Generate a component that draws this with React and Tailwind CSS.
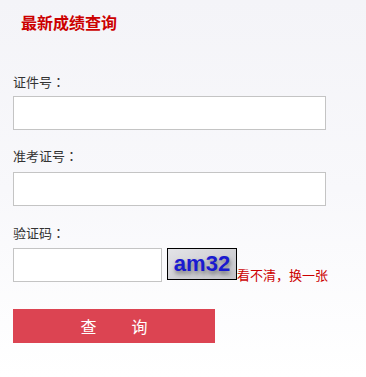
const Colon = () => (
  <span style={{ fontFamily: '"Noto Sans CJK TC", sans-serif' }}>：</span>
);

export default function App() {
  const font = { fontFamily: '"Microsoft YaHei", "Noto Sans CJK SC", "Noto Sans", sans-serif' };
  return (
    <div
      className="w-[366px] h-[377px] bg-gradient-to-b from-[#f4f4f8] via-[#f8f8fb] to-white flex flex-col pl-[13px]"
      style={font}
    >
      <div className="mt-[12px] ml-[8px] text-[16px] leading-[20px] font-bold text-[#cc0000]">最新成绩查询</div>

      <div className="mt-[42px] text-[13px] leading-[16px] text-[#333]">证件号<Colon /></div>
      <input className="mt-[6px] w-[313px] h-[34px] bg-white border border-[#c4c4c4] outline-none" />

      <div className="mt-[18px] text-[13px] leading-[16px] text-[#333]">准考证号<Colon /></div>
      <input className="mt-[8px] w-[313px] h-[34px] bg-white border border-[#c4c4c4] outline-none" />

      <div className="mt-[19px] text-[13px] leading-[16px] text-[#333]">验证码<Colon /></div>
      <div className="mt-[7px] flex items-end">
        <input className="w-[149px] h-[34px] bg-white border border-[#c4c4c4] outline-none" />
        <div className="ml-[5px] mb-[2px] w-[70px] h-[32px] border border-black bg-gradient-to-br from-[#e4e4e8] via-[#d2d2d6] to-[#c4c4ca] flex items-center justify-center">
          <span
            className="text-[22px] leading-none font-bold text-[#1a1ad0] [text-shadow:1px_3px_4px_rgba(0,0,0,0.45)]"
            style={{ fontFamily: '"Liberation Sans", Arial, sans-serif' }}
          >
            am32
          </span>
        </div>
        <span className="text-[13px] leading-[16px] text-[#cc0000] mb-[-1px]">看不清，换一张</span>
      </div>

      <button className="mt-[27px] w-[202px] h-[34px] bg-[#dc4452] text-white text-[16px] flex items-center justify-center gap-[35px]">
        <span>查</span>
        <span>询</span>
      </button>
    </div>
  );
}
